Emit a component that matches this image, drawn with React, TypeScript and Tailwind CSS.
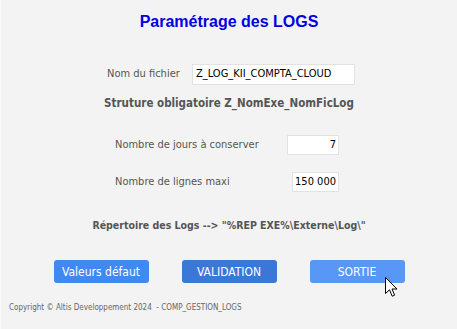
// ── Champs du formulaire ─────────────────────────────────────────────────

function Field({ label, value, width }: { label: string; value: string; width: string }) {
  return (
    <div className="flex items-center justify-between w-[224px] h-[20px]">
      <span className="text-[11px] text-[#555555]">{label}</span>
      <div className={`${width} h-[20px] bg-white border border-[#e2e2e2] flex items-center justify-end pr-[2px] text-[11px] text-black`}>
        {value}
      </div>
    </div>
  )
}

// ── Curseur souris (flèche Windows) ──────────────────────────────────────

function Cursor() {
  return (
    <svg width="13" height="21" viewBox="0 0 13 21" className="absolute left-[384px] top-[277px]">
      <path
        d="M0.5 0.5 L0.5 16.5 L4.5 12.8 L7.2 19.2 L9.6 18.2 L7 12 L12 12 Z"
        fill="white"
        stroke="black"
        strokeWidth="1"
        strokeLinejoin="round"
      />
    </svg>
  )
}

// ── Écran de paramétrage ─────────────────────────────────────────────────

export default function App() {
  return (
    <div
      className="w-[457px] h-[329px] bg-[#f3f3f3] border-l border-[#fafafa] flex flex-col relative overflow-hidden"
      style={{ fontFamily: '"DejaVu Sans Condensed", "DejaVu Sans", sans-serif' }}
    >
      <h1 className="text-center font-bold text-[16px] text-[#0000e0] mt-[12px] leading-[20px] font-['Liberation_Sans',Arial,sans-serif]">
        Paramétrage des LOGS
      </h1>

      {/* nom du fichier */}
      <div className="flex items-center mt-[32px] ml-[106px] h-[21px]">
        <span className="text-[11px] text-[#555555] w-[85px]">Nom du fichier</span>
        <div className="w-[163px] h-[21px] bg-white border border-[#e2e2e2] flex items-center pl-[3px] text-[11px] text-black">
          Z_LOG_KII_COMPTA_CLOUD
        </div>
      </div>

      <p className="text-center text-[11.5px] font-bold text-[#555555] mt-[11px] leading-[14px]">
        Struture obligatoire Z_NomExe_NomFicLog
      </p>

      <div className="flex flex-col gap-[17px] ml-[114px] mt-[25px]">
        <Field label="Nombre de jours à conserver" value="7" width="w-[52px]" />
        <Field label="Nombre de lignes maxi" value="150 000" width="w-[47px]" />
      </div>

      <p className="text-center text-[10.5px] font-bold text-[#555555] mt-[26px] leading-[14px]">
        Répertoire des Logs --&gt; "%REP EXE%\Externe\Log\"
      </p>

      {/* boutons */}
      <div className="flex justify-center gap-[33px] mt-[28px]">
        <button className="w-[95px] h-[23px] rounded-[3px] bg-[#4189f2] text-white text-[12px]">Valeurs défaut</button>
        <button className="w-[95px] h-[23px] rounded-[3px] bg-[#3a77d9] text-white text-[12px]">VALIDATION</button>
        <button className="w-[95px] h-[23px] rounded-[3px] bg-[#5897f5] text-white text-[12px]">SORTIE</button>
      </div>

      <p className="text-[8px] text-[#666666] ml-[8px] mt-[19px]">
        Copyright © Altis Developpement 2024&nbsp; - COMP_GESTION_LOGS
      </p>

      <Cursor />
    </div>
  )
}
